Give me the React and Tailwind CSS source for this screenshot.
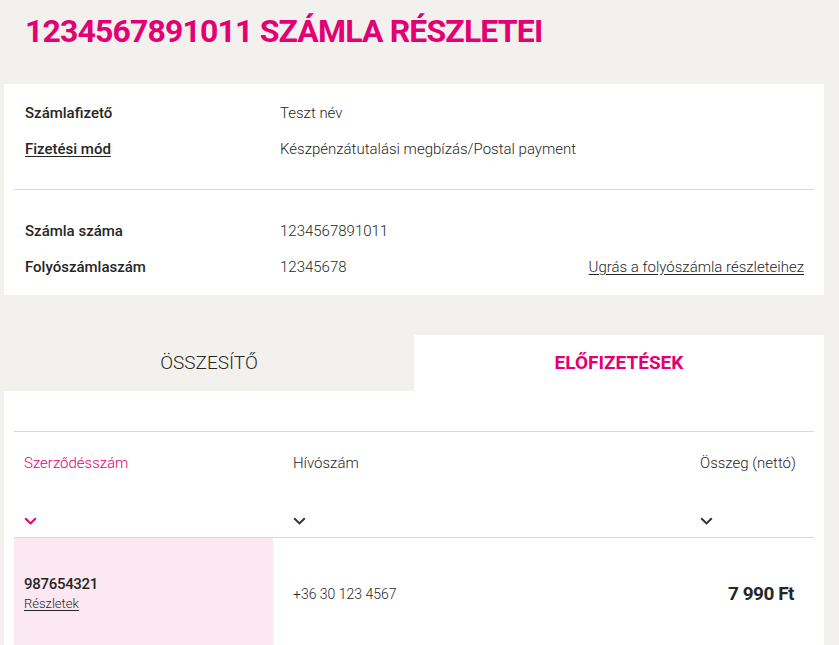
const MAGENTA = 'text-[#e20074]';

function Chevron({ className }) {
  return (
    <svg width="13" height="8" viewBox="0 0 13 8" className={className} fill="none">
      <polyline points="1.2,1.2 6.5,6.4 11.8,1.2" stroke="currentColor" strokeWidth="2" />
    </svg>
  );
}

function InfoRow({ label, value, underline, link }) {
  return (
    <div className="flex h-9 items-center">
      <div className={`w-[266px] pl-[11px] text-[15px] font-medium text-[#262626] ${underline ? 'underline underline-offset-2' : ''}`}>
        {label}
      </div>
      <div className="flex-1 text-[15px] font-light text-[#262626]">{value}</div>
      {link && (
        <a className="pr-[10px] text-[15px] font-light text-[#262626] underline underline-offset-2">{link}</a>
      )}
    </div>
  );
}

export default function App() {
  return (
    <div className="min-h-[645px] bg-[#f2f1ed] font-['Roboto',sans-serif] text-[#262626]">
      <h1 className={`px-[25px] pt-[11px] pb-[33px] text-[32px] font-bold leading-[40px] tracking-[-0.85px] ${MAGENTA}`}>
        1234567891011 SZÁMLA RÉSZLETEI
      </h1>

      <div className="ml-1 w-[820px] bg-white px-[10px] pt-[11px] pb-[10px]">
        <InfoRow label="Számlafizető" value="Teszt név" />
        <InfoRow label="Fizetési mód" value="Készpénzátutalási megbízás/Postal payment" underline />
        <div className="mt-[22px] mb-[23px] h-px bg-[#d9d9d9]" />
        <InfoRow label="Számla száma" value="1234567891011" />
        <InfoRow label="Folyószámlaszám" value="12345678" link="Ugrás a folyószámla részleteihez" />
      </div>

      <div className="mt-[40px] ml-1 w-[820px]">
        <div className="flex h-[56px]">
          <button className="flex w-[410px] items-center justify-center text-[19px] font-light text-[#262626]">
            ÖSSZESÍTŐ
          </button>
          <button className={`flex flex-1 items-center justify-center bg-white text-[19px] font-bold ${MAGENTA}`}>
            ELŐFIZETÉSEK
          </button>
        </div>

        <div className="bg-white px-[10px] pt-[40px]">
          <div className="h-px bg-[#d9d9d9]" />
          <div className="grid h-[106px] grid-cols-[259px_1fr_134px] border-b border-[#d9d9d9]">
            <div className="flex flex-col justify-between pl-[10px] pt-[20px] pb-[12px]">
              <span className={`text-[15px] font-light ${MAGENTA}`}>Szerződésszám</span>
              <Chevron className={MAGENTA} />
            </div>
            <div className="flex flex-col justify-between pl-5 pt-[20px] pb-[12px]">
              <span className="text-[15px] font-light">Hívószám</span>
              <Chevron className="text-[#333]" />
            </div>
            <div className="flex flex-col justify-between pl-5 pt-[20px] pb-[12px]">
              <span className="text-[15px] font-light">Összeg (nettó)</span>
              <Chevron className="text-[#333]" />
            </div>
          </div>
          <div className="grid h-[112px] grid-cols-[259px_1fr_134px]">
            <div className="flex flex-col justify-center bg-[#fbe8f1] pl-[10px]">
              <span className="text-[15px] font-medium leading-5 tracking-[-0.3px]">987654321</span>
              <a className="text-[13px] font-light leading-5 underline underline-offset-2">Részletek</a>
            </div>
            <div className="flex items-center pl-5 text-[14px] font-light">+36 30 123 4567</div>
            <div className="flex items-center justify-end pr-5 text-[19px] font-bold tracking-[-0.5px]">7 990 Ft</div>
          </div>
        </div>
      </div>
    </div>
  );
}
